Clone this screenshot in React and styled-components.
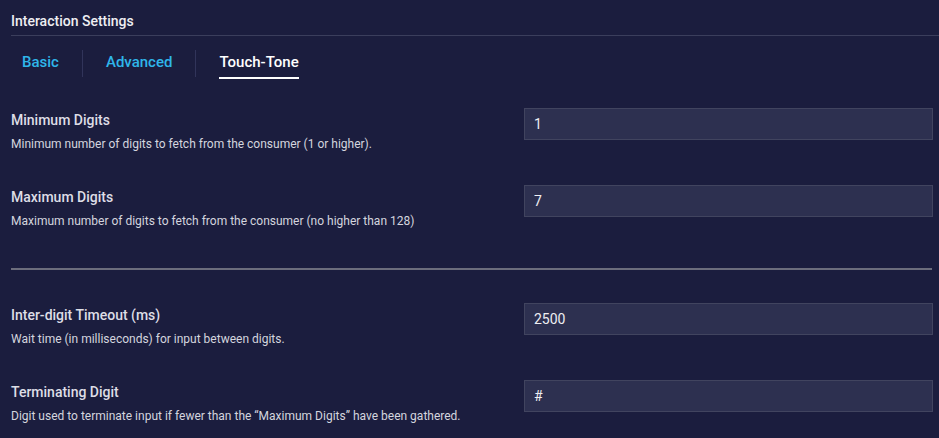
import React, { useState } from 'react';
import styled, { createGlobalStyle } from 'styled-components';

const GlobalStyle = createGlobalStyle`
  html, body {
    margin: 0;
    padding: 0;
    background: #1b1d3e;
  }
  body {
    font-family: Roboto, 'Liberation Sans', sans-serif;
    -webkit-font-smoothing: antialiased;
  }
`;

const Page = styled.div`
  width: 939px;
  height: 438px;
  box-sizing: border-box;
  padding: 0 0 0 11px;
  background: #1b1d3e;
  overflow: hidden;
`;

const Header = styled.div`
  height: 36px;
  display: flex;
  align-items: center;
  padding-top: 6px;
  box-sizing: border-box;
  border-bottom: 1px solid #3b3e5c;
  color: #eeeef2;
  font-size: 14px;
  font-weight: 500;
`;

const Tabs = styled.div`
  display: flex;
  align-items: stretch;
  height: 27px;
  margin-top: 14px;
`;

const Tab = styled.div`
  display: flex;
  align-items: flex-start;
  padding: 3px 23px 0;
  box-sizing: border-box;
  font-size: 15px;
  font-weight: 500;
  color: ${p => (p.$active ? '#ffffff' : '#2fb6ea')};
  cursor: pointer;

  &:first-child {
    padding-left: 11px;
  }

  & + & {
    border-left: 1px solid #31345a;
  }

  span {
    position: relative;
    display: inline-block;
    line-height: 18px;
  }

  span::after {
    content: '';
    display: ${p => (p.$active ? 'block' : 'none')};
    position: absolute;
    left: 0;
    right: 0;
    bottom: -8px;
    height: 2px;
    background: #ffffff;
  }
`;

const Section = styled.div`
  padding-right: 6px;
  margin-top: ${p => p.$top || 0}px;
`;

const Row = styled.div`
  display: flex;
  justify-content: space-between;
  align-items: flex-start;
  height: 77px;
`;

const Info = styled.div`
  padding-top: 4px;
`;

const Label = styled.div`
  color: #dedee6;
  font-size: 14px;
  font-weight: 500;
  line-height: 16px;
`;

const Hint = styled.div`
  margin-top: 9px;
  color: #d4d5de;
  font-size: 12px;
  line-height: 14px;
`;

const Input = styled.input`
  width: 409px;
  height: 32px;
  box-sizing: border-box;
  background: #2d3050;
  border: 1px solid #41445f;
  border-radius: 0;
  padding: 0 9px;
  color: #eeeef2;
  font-family: Roboto, 'Liberation Sans', sans-serif;
  font-size: 14px;
  outline: none;
`;

const Divider = styled.hr`
  border: none;
  height: 2px;
  background: #6c6d7c;
  margin: 6px 7px 33px 0;
`;

const fields = [
  [
    { label: 'Minimum Digits', hint: 'Minimum number of digits to fetch from the consumer (1 or higher).', value: '1' },
    { label: 'Maximum Digits', hint: 'Maximum number of digits to fetch from the consumer (no higher than 128)', value: '7' },
  ],
  [
    { label: 'Inter-digit Timeout (ms)', hint: 'Wait time (in milliseconds) for input between digits.', value: '2500' },
    { label: 'Terminating Digit', hint: 'Digit used to terminate input if fewer than the \u201cMaximum Digits\u201d have been gathered.', value: '#' },
  ],
];

const Field = ({ label, hint, value }) => {
  const [val, setVal] = useState(value);
  return (
    <Row>
      <Info>
        <Label>{label}</Label>
        <Hint>{hint}</Hint>
      </Info>
      <Input value={val} onChange={e => setVal(e.target.value)} />
    </Row>
  );
};

const App = () => {
  const [tab, setTab] = useState('Touch-Tone');
  return (
    <Page>
      <GlobalStyle />
      <Header>Interaction Settings</Header>
      <Tabs>
        {['Basic', 'Advanced', 'Touch-Tone'].map(t => (
          <Tab key={t} $active={t === tab} onClick={() => setTab(t)}>
            <span>{t}</span>
          </Tab>
        ))}
      </Tabs>
      <Section $top={31}>
        {fields[0].map(f => <Field key={f.label} {...f} />)}
      </Section>
      <Divider />
      <Section>
        {fields[1].map(f => <Field key={f.label} {...f} />)}
      </Section>
    </Page>
  );
};

export default App;
